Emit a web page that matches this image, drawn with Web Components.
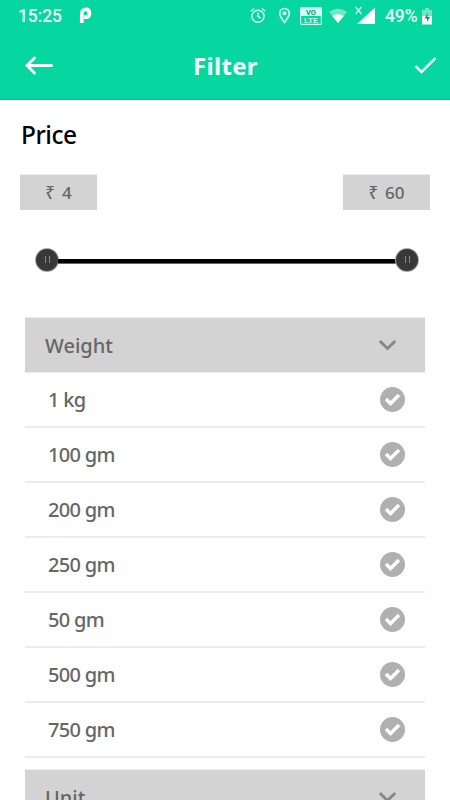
<!DOCTYPE html>
<html lang="en">
<head>
<meta charset="utf-8">
<title>Filter</title>
<style>
html,body{margin:0;height:100%;overflow:hidden;background:#fff}
body{font-family:"Noto Sans","Open Sans",sans-serif}
</style>
</head>
<body>
<filter-screen></filter-screen>
<script>
const define = (name, html) => {
  const template = document.createElement('template');
  template.innerHTML = html;
  customElements.define(name, class extends HTMLElement {
    constructor() {
      super();
      this.attachShadow({ mode: 'open' }).append(template.content.cloneNode(true));
    }
  });
};

define('status-bar', `
<style>
:host{display:flex;height:32px;box-sizing:border-box;padding:0 18px 0 18px;align-items:center;color:#e9fff9;font:500 17.5px/32px Roboto,sans-serif}
.time{width:61px;letter-spacing:-.1px}
.icons{margin-left:auto;display:flex;align-items:center}
.pct{width:34px;margin-left:8px;font-size:17.500px;letter-spacing:-.1px;white-space:nowrap}
svg{display:block;flex:none}
</style>
<span class="time">15:25</span>
<svg width="13" height="18" viewBox="0 0 13 18"><path d="M2.800 16V7Q2.800 2.300 7 2.300q3.400 0 3.400 3.900T7 10.200H5" fill="none" stroke="#fff" stroke-width="3.700"/></svg>
<div class="icons">
<svg width="18" height="18" viewBox="0 0 18 18" fill="none" stroke="#d6fff3" stroke-width="1.500"><circle cx="9" cy="9.200" r="6"/><path d="M9 5.500v4l2.600 1.600M1.800 4.200 5 1.500M16.200 4.200 13 1.500"/></svg>
<svg width="13" height="18" viewBox="0 0 13 18" style="margin-left:10.500px" fill="none" stroke="#d6fff3" stroke-width="1.700"><path d="M6.500 15.500Q1.700 9.500 1.700 6.300a4.800 4.800 0 0 1 9.600 0Q11.300 9.500 6.500 15.500z"/><circle cx="6.500" cy="6.300" r="1.200" fill="#d6fff3"/></svg>
<svg width="22" height="18" viewBox="0 0 22 18" style="margin-left:9px;margin-top:-1px"><rect x=".600" y=".600" width="20.800" height="16.800" rx="1" fill="none" stroke="#d6fff3" stroke-width="1.200"/><path d="M1 1h20v8H1z" fill="#d6fff3"/><text x="11" y="7.800" text-anchor="middle" textLength="10" font-family="Roboto" font-weight="700" font-size="7.500" fill="#089c78">VO</text><text x="11" y="16" text-anchor="middle" textLength="14" lengthAdjust="spacingAndGlyphs" font-family="Roboto" font-weight="700" font-size="8" fill="#c4fdeb">LTE</text></svg>
<svg width="18" height="16" viewBox="0 0 18 16" style="margin-left:7px"><path d="M0 4q9-6.500 18 0L9 15z" fill="#70e8c5"/><path d="M3.300 8Q9 4.300 14.700 8L9 15z" fill="#fff"/></svg>
<svg width="22" height="20" viewBox="0 0 22 20" style="margin-left:8.500px;margin-top:-1px"><path d="M20 1.500V18H2z" fill="#fff"/><path d="m.500 1 6 7m0-7-6 7" stroke="#d6fff3" stroke-width="1.300"/></svg>
<span class="pct">49%</span>
<svg width="10" height="17" viewBox="0 0 10 17" style="margin-left:3px"><path d="M3 0h4v2h3v6H0V2h3z" fill="#70e8c5"/><path d="M0 8h10v8.500H0z" fill="#fff"/><path d="M6 4.500 2.500 10.500H5V14l3-5H5.500z" fill="#079c77"/></svg>
</div>`);

define('app-header', `
<style>
:host{display:grid;grid-template-columns:60px 1fr 60px;height:67px;align-items:center}
h1{margin:0;padding-left:1px;text-align:center;color:#f4fffc;font:700 24px/66px "Noto Sans",sans-serif;letter-spacing:.3px}
svg{display:block}
</style>
<svg width="60" height="66" viewBox="0 0 60 66" fill="none" stroke="#f4fffc" stroke-width="3" stroke-linecap="round" stroke-linejoin="round"><path d="M51.500 32.500H27m7.500-7.500L27 32.500l7.500 7.500"/></svg>
<h1><slot></slot></h1>
<svg width="60" height="66" viewBox="0 0 60 66" fill="none" stroke="#e5fff7" stroke-width="2.500"><path d="m25.500 33 6 6L45.500 25"/></svg>`);

define('price-tag', `
<style>
:host{display:block;height:35px;background:#d3d3d3;box-shadow:0 -1px #ededed;color:#666;font:500 17px/35px "Noto Sans",sans-serif;text-align:center;word-spacing:2.500px}
</style><slot></slot>`);

define('slider-thumb', `
<style>
:host{display:flex;flex:none;width:22px;height:22px;border-radius:50%;background:#383838;box-shadow:0 0 0 1px #aaa;align-items:center;justify-content:center;gap:3px}
i{width:1px;height:7px;background:#888}
</style><i></i><i></i>`);

define('range-slider', `
<style>
:host{display:flex;align-items:center;margin:38.500px 32px 0 36px;height:22px}
.track{flex:1;height:4px;background:#000;border-bottom:1px solid #666;margin-top:3px}
</style><slider-thumb></slider-thumb><div class="track"></div><slider-thumb></slider-thumb>`);

define('price-filter', `
<style>
:host{display:block;height:218px;box-sizing:border-box;padding-top:17px}
h2{margin:0 0 22px 21px;font:500 24.500px/36px "Noto Sans",sans-serif;color:#000;letter-spacing:-.500px}
.tags{display:flex;justify-content:space-between;margin:0 20px}
.low{width:77px}.high{width:87px}
</style>
<h2>Price</h2>
<div class="tags"><price-tag class="low">₹ 4</price-tag><price-tag class="high">₹ 60</price-tag></div>
<range-slider></range-slider>`);

define('section-header', `
<style>
:host{display:flex;justify-content:space-between;align-items:center;height:54px;padding:0 28px 0 20px;background:#d3d3d3;box-shadow:0 -1px #ededed;border-bottom:1px solid #ededed;color:#666;font:500 20px/50px "Noto Sans",sans-serif}
span{margin-top:2px}
svg{display:block}
</style><span><slot></slot></span>
<svg width="19" height="13" viewBox="0 0 19 13" fill="none" stroke="#888" stroke-width="3"><path d="m1.800 2 7.700 7.500L17.200 2"/></svg>`);

define('option-row', `
<style>
:host{display:flex;justify-content:space-between;align-items:center;height:55px;box-sizing:border-box;padding:0 20px 0 23px;border-bottom:2px solid #ececec;color:#666;font:500 20px/53px "Noto Sans",sans-serif;letter-spacing:-.7px}
</style><span><slot></slot></span>
<svg width="25" height="25" viewBox="0 0 25 25"><circle cx="12.500" cy="12.500" r="12.500" fill="#b0b0b0"/><path d="m6 12 4.500 4.500 8.500-8.500" fill="none" stroke="#fff" stroke-width="3.400"/></svg>`);

define('option-group', `
<style>:host{display:block;margin:0 25px 12px}</style>
<slot name="header"></slot><slot></slot>`);

define('filter-screen', `
<style>
:host{display:block;height:800px;overflow:hidden;background:#fff}
.top{background:#06d6a0;height:100px;box-sizing:border-box;border-bottom:1px solid #08bd91}
</style>
<div class="top"><status-bar></status-bar><app-header>Filter</app-header></div>
<price-filter></price-filter>
<option-group>
<section-header slot="header">Weight</section-header>
<option-row>1 kg</option-row><option-row>100 gm</option-row><option-row>200 gm</option-row><option-row>250 gm</option-row><option-row>50 gm</option-row><option-row>500 gm</option-row><option-row>750 gm</option-row>
</option-group>
<option-group><section-header slot="header">Unit</section-header></option-group>`);
</script>
</body>
</html>
